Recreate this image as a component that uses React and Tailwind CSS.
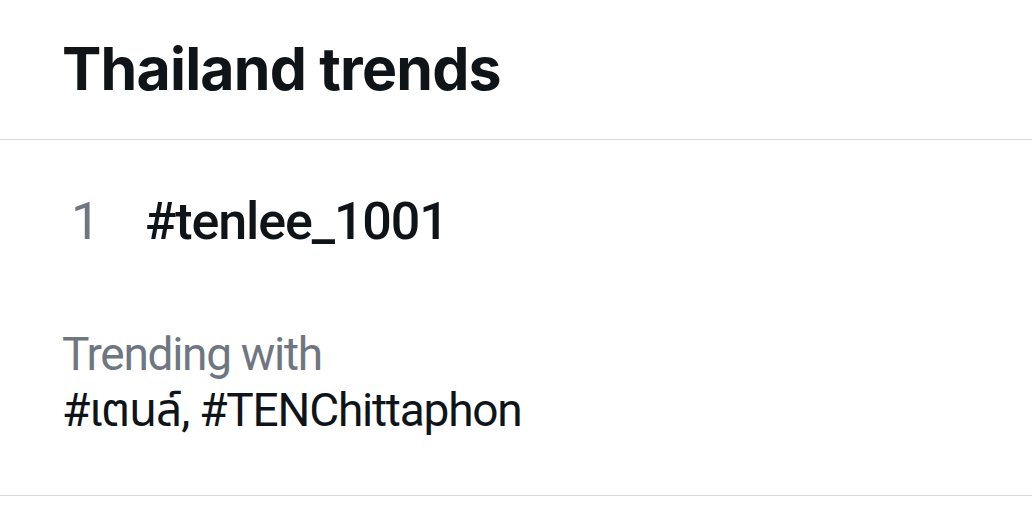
import React from "react";

const font = { fontFamily: "Inter, 'Noto Sans Thai', 'Noto Sans', sans-serif" };
const rowFont = { fontFamily: "Roboto, 'Noto Sans Thai', 'Noto Sans', sans-serif" };

export default function App() {
  return (
    <div className="w-[1032px] h-[508px] bg-white overflow-hidden" style={font}>
      <div className="h-[140px] border-b border-[#d6d6d6] pl-[62px] pt-[39px]">
        <h1 className="text-[59px] leading-[59px] font-bold text-[#0f1419] tracking-[-0.8px]">
          Thailand trends
        </h1>
      </div>
      <div className="border-b border-[#d6d6d6] pb-[57px]" style={rowFont}>
        <div className="flex items-start pt-[56px]">
          <span className="w-[145px] pl-[71px] text-[52px] leading-[52px] text-[#6e7781]">1</span>
          <span className="text-[52px] leading-[52px] font-medium text-[#0f1419] tracking-[-1.1px]">
            #tenlee_1001
          </span>
        </div>
        <div className="pl-[62px] mt-[78px] text-[46px] leading-[56px]">
          <div className="text-[#6e7781] tracking-[-1.3px]">Trending with</div>
          <div className="text-[#0f1419] tracking-[-1.2px]">#เตนล์, #TENChittaphon</div>
        </div>
      </div>
    </div>
  );
}
